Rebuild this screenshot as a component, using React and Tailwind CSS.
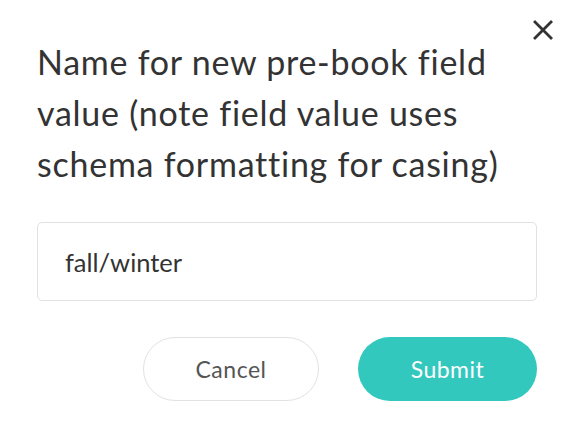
import React, { useState } from "react";

const App = () => {
  const [value, setValue] = useState("fall/winter");

  return (
    <div
      className="relative w-[572px] h-[432px] bg-white text-[#333333]"
      style={{ fontFamily: "Lato, 'Open Sans', sans-serif", fontVariantLigatures: "none" }}
    >
      {/* Close */}
      <button className="absolute top-[19px] right-[18px] w-[22px] h-[22px] flex items-center justify-center">
        <svg width="22" height="22" viewBox="0 0 22 22" fill="none">
          <path d="M3 3L19 19M19 3L3 19" stroke="#333333" strokeWidth="2.8" strokeLinecap="square" />
        </svg>
      </button>

      <div className="pl-[37px] pr-[35px] pt-[36px]">
        <h2 className="text-[34px] leading-[51px] tracking-[0.75px] font-normal">
          Name for new pre-book field value (note field value uses schema formatting for casing)
        </h2>

        <input
          type="text"
          value={value}
          onChange={(e) => setValue(e.target.value)}
          className="mt-[33px] w-[500px] h-[79px] px-[27px] rounded-[5px] border border-[#e2e2e2] text-[25.5px] text-[#333333] outline-none"
        />

        <div className="mt-[36px] flex justify-end gap-[39px]">
          <button className="w-[176px] h-[64px] rounded-full border border-[#e2e2e2] bg-white text-[23px] text-[#555555] tracking-[0.5px]">
            Cancel
          </button>
          <button className="w-[179px] h-[64px] rounded-full bg-[#33c8be] text-[23px] text-white tracking-[0.5px]">
            Submit
          </button>
        </div>
      </div>
    </div>
  );
};

export default App;
